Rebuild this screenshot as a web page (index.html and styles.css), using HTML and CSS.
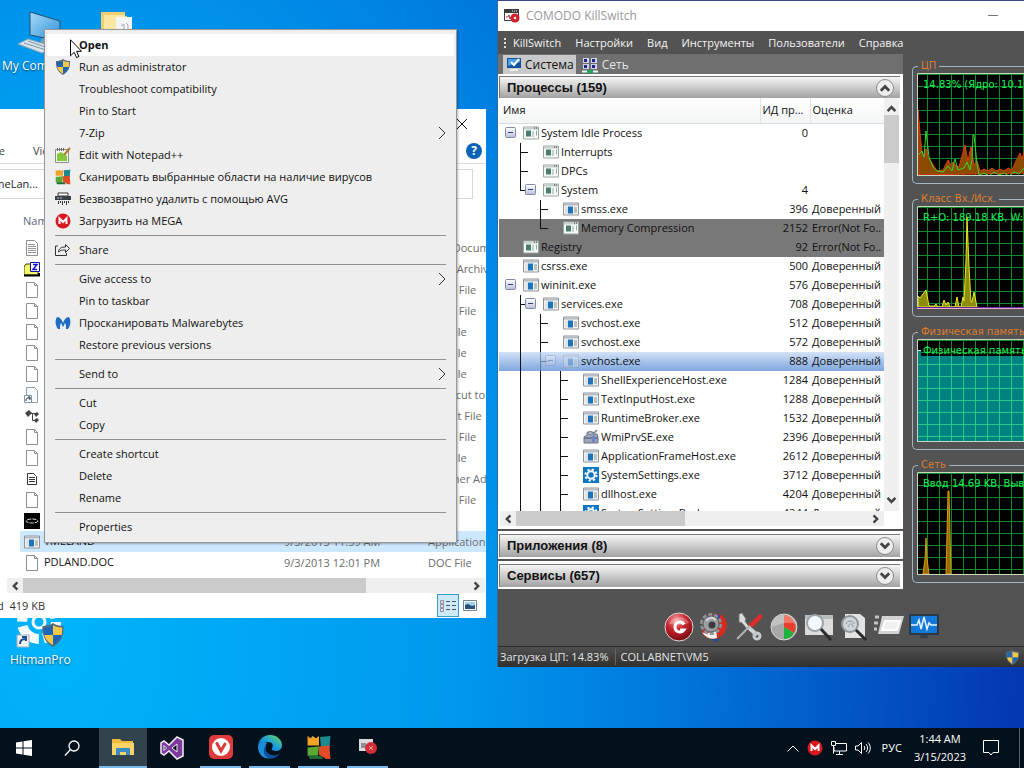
FILE: index.html
```html
<!DOCTYPE html>
<html lang="ru">
  <head>
    <meta charset="UTF-8" />
    <meta name="viewport" content="width=device-width, initial-scale=1.0" />
    <title>COMODO KillSwitch</title>
    <link rel="stylesheet" href="styles.css">
  </head>
  <body>
    <!-- shared icons -->
    <svg class="sprite" aria-hidden="true">
      <defs>
        <linearGradient id="screenFill" x1="0" y1="0" x2="1" y2="1">
          <stop offset="0" stop-color="#a8dcf8" />
          <stop offset="1" stop-color="#2a8fd8" />
        </linearGradient>
        <linearGradient id="edgeFill" x1="0" y1="1" x2="1" y2="0">
          <stop offset="0" stop-color="#0c59a4" />
          <stop offset="0.5" stop-color="#1b9de2" />
          <stop offset="1" stop-color="#6be04c" />
        </linearGradient>
        <radialGradient id="redBall" cx="0.4" cy="0.25" r="0.8">
          <stop offset="0" stop-color="#f3a0a0" />
          <stop offset="0.45" stop-color="#c8232c" />
          <stop offset="1" stop-color="#6d0a10" />
        </radialGradient>
        <linearGradient id="expanderFill" x1="0" y1="0" x2="0" y2="1">
          <stop offset="0" stop-color="#ffffff" />
          <stop offset="1" stop-color="#b9bfdc" />
        </linearGradient>
        <pattern id="grid" width="12" height="12" patternUnits="userSpaceOnUse">
          <path d="M10.5 0V12M0 1.5H12" stroke="#128a2c" />
        </pattern>
        <pattern id="gridTeal" width="12" height="12" patternUnits="userSpaceOnUse">
          <path d="M10.5 0V12M0 1.5H12" stroke="#22c987" />
        </pattern>
      </defs>
      <symbol id="exe" viewBox="0 0 16 13">
        <path d="M.5.5h15v12H.5z" fill="#f4f4f4" stroke="#8d949c" />
        <path d="M1 1h14v2H1z" fill="#b4bcc4" />
        <path d="M2 4h3v7H2z" fill="#dfe3e6" />
        <path d="M5 4h5v7H5z" fill="#1c75bc" />
        <path d="M11 5.500h3M11 7.500h3M11 9.500h3" stroke="#8c8c8c" />
      </symbol>
      <symbol id="sys" viewBox="0 0 16 13">
        <path d="M.5.5h15v12H.5z" fill="#f6faf7" stroke="#9aa59f" />
        <path d="M1 1h14v2H1z" fill="#c6d0ca" />
        <path d="M11 1h1v1h-1zM13 1h1v1h-1z" fill="#333" />
        <path d="M3 4h5v6H3z" fill="#4b7d6c" />
        <path d="M9 5.500h2M9 7.500h2M9 9.500h2M13.500 4v5" stroke="#8faaa0" />
      </symbol>
      <symbol id="gear" viewBox="0 0 16 16">
        <path d="M0 0h16v16H0z" fill="#0f76c4" />
        <circle cx="8" cy="8" r="3.700" fill="none" stroke="#fff" stroke-width="2" />
        <circle cx="8" cy="8" r="5.600" fill="none" stroke="#fff" stroke-width="2" stroke-dasharray="2.200 2.200" />
      </symbol>
      <symbol id="wmi" viewBox="0 0 16 16">
        <path d="M1 8l4-3h9l1 3v6H1z" fill="#9aa3b8" stroke="#6d7486" />
        <path d="M1 9h14" stroke="#525a6e" />
        <path d="M4 5c0-3 6-3 7 0M11 4l3-3" fill="none" stroke="#7c8494" stroke-width="1.500" />
        <path d="M9 7h3v6H9z" fill="#6d88c4" />
      </symbol>
      <symbol id="minus" viewBox="0 0 12 12">
        <rect x=".5" y=".5" width="10" height="10" rx="1" fill="url(#expanderFill)" stroke="#8087a8" />
        <path d="M3 5.500h5" stroke="#34446e" />
      </symbol>
      <symbol id="page" viewBox="0 0 16 16">
        <path d="M2.500.5h8l3 3v12h-11z" fill="#fff" stroke="#8f8f8f" />
        <path d="M10.500.5v3h3" fill="none" stroke="#8f8f8f" />
      </symbol>
      <symbol id="text-page" viewBox="0 0 16 16">
        <path d="M2.500.5h8l3 3v12h-11z" fill="#fff" stroke="#8f8f8f" />
        <path d="M4 4.500h7M4 6.500h8M4 8.500h8M4 10.500h8M4 12.500h8" stroke="#999" />
      </symbol>
      <symbol id="shield" viewBox="0 0 16 16">
        <path d="M8 0c2 1.500 4.500 2 7 2 .4 7-2 11-7 14C3 13 .6 9 1 2c2.500 0 5-.5 7-2z" fill="#5b6b7c" />
        <path d="M8 1.500V8H2.200C1.900 6.500 1.900 4.500 2 3c2 0 4-.4 6-1.500z" fill="#1e66b4" />
        <path d="M8 1.500V8h5.800c.3-1.500.3-3.500.2-5-2 0-4-.4-6-1.500z" fill="#f5c746" />
        <path d="M8 8v6.700C4.700 12.700 2.900 11 2.200 8z" fill="#f5c746" />
        <path d="M8 8v6.700c3.300-2 5.100-3.700 5.800-6.700z" fill="#1e66b4" />
      </symbol>
      <symbol id="avg" viewBox="0 0 24 24">
        <path d="M1 1l3 2 2-2 3 2 3-2v9H1z" fill="#f2a128" />
        <path d="M13 2l10-1-1 11-8 1z" fill="#1a8a8e" />
        <path d="M1 12l11-1-1 9H1z" fill="#5aa832" />
        <path d="M12 11l10-1 1 13h-4l-7-4z" fill="#e04b26" />
        <path d="M2 20h12l2 3H3z" fill="#1d6a34" />
      </symbol>
      <symbol id="mega" viewBox="0 0 16 16">
        <circle cx="8" cy="8" r="7.500" fill="#d9171f" />
        <path d="M4.500 11V5.500L8 9l3.500-3.500V11" fill="none" stroke="#fff" stroke-width="2" />
      </symbol>
      <symbol id="right" viewBox="0 0 8 14">
        <path d="M1 1l6 6-6 6" fill="none" stroke="#333" />
      </symbol>
      <symbol id="chevron" viewBox="0 0 10 10">
        <path d="M2 7l3-3 3 3" fill="none" stroke="#444" stroke-width="2" />
      </symbol>
    </svg>

    <main class="desktop">
      <a class="shortcut my-computer" href="#">
        <svg viewBox="0 0 44 44" width="44" height="44">
          <path d="M12 2l30 9v20l-30-6z" fill="url(#screenFill)" stroke="#24506e" />
          <path d="M24 28l8 2 2 6-12-3z" fill="#7f9cb0" />
          <path d="M10 29l26 8-12 6-24-9z" fill="#d9e4ec" stroke="#93a9b8" />
          <path d="M6 33l22 7M10 31l20 7" stroke="#7d94a4" />
        </svg>
        <span>My Computer</span>
      </a>
      <a class="shortcut folder" href="#" aria-label="Folder">
        <svg viewBox="0 0 32 34" width="32" height="34">
          <path d="M0 1l24 0v4h2v29H0z" fill="#f2cf6e" />
          <path d="M3 4h21v30H3z" fill="#fbe6a2" />
          <path d="M15 6h16v24H15z" fill="#f3f4f5" />
          <path d="M20 15l3-2v5M25 12l2 2v4" fill="none" stroke="#a7adb3" />
        </svg>
      </a>
      <a class="shortcut hitman" href="#">
        <svg viewBox="0 0 52 44" width="52" height="44">
          <circle cx="25" cy="14" r="17" fill="none" stroke="#f6fbff" stroke-width="10" stroke-dasharray="22 4.700" />
          <circle cx="25" cy="14" r="6" fill="none" stroke="#f6fbff" stroke-width="3" />
          <path d="M3 27h12v12H3z" fill="#f2f2f2" stroke="#9bb1bd" />
          <path d="M6 36c0-4 2-5 5-5M8 29h4v4" fill="none" stroke="#1e4f8e" stroke-width="2" />
          <svg x="27" y="15" width="24" height="24"><use href="#shield" /></svg>
        </svg>
        <span>HitmanPro</span>
      </a>

      <section class="window explorer">
        <header class="explorer-title">
          <button class="plain" aria-label="Close">
            <svg viewBox="0 0 10 10" width="10" height="10"><path d="M0 0l10 10M10 0L0 10" stroke="#111" /></svg>
          </button>
        </header>
        <nav class="ribbon">
          <a href="#" class="cut-left">Share</a>
          <a href="#">View</a>
          <button class="help" aria-label="Help">?</button>
        </nav>
        <div class="address">
          <div class="path"><span>TimeLan...</span></div>
          <input class="search-box" type="text" aria-label="Search" />
        </div>
        <table class="files">
          <colgroup><col class="file-name"><col class="file-date"><col></colgroup>
          <thead>
            <tr><th>Name</th><th>Date modified</th><th>Type</th></tr>
          </thead>
          <tbody>
            <tr><td><svg><use href="#text-page" /></svg>README</td><td></td><td>Text Document</td></tr>
            <tr>
              <td>
                <svg viewBox="0 0 16 16">
                  <path d="M0 6l2-3h12v11H0z" fill="#f8f86c" stroke="#3c3c00" />
                  <path d="M0 14.500h15V12" stroke="#000" stroke-width="2" fill="none" />
                  <path d="M6.500 1.500h9v9h-9z" fill="#fff" stroke="#1414a0" />
                  <path d="M9 3.500h4l-4 5h4" fill="none" stroke="#1414c8" stroke-width="1.500" />
                </svg>TIMELAND
              </td>
              <td></td><td>7-ZIP Archive</td>
            </tr>
            <tr><td><svg><use href="#page" /></svg>DATA1</td><td></td><td>DATA File</td></tr>
            <tr><td><svg><use href="#page" /></svg>DATA2</td><td></td><td>DATA File</td></tr>
            <tr><td><svg><use href="#page" /></svg>DATA3</td><td></td><td>BIN File</td></tr>
            <tr><td><svg><use href="#page" /></svg>DATA4</td><td></td><td>BIN File</td></tr>
            <tr><td><svg><use href="#page" /></svg>DATA5</td><td></td><td>BIN File</td></tr>
            <tr>
              <td>
                <svg viewBox="0 0 16 16">
                  <path d="M2.500.5h8l3 3v12h-11z" fill="#f5f9fc" stroke="#8f9fb0" />
                  <path d="M.5 8.500h7v7h-7z" fill="#fff" stroke="#7d9ab4" />
                  <path d="M2 14c0-3 1-3 4-3M4 10h2v3" fill="none" stroke="#222" />
                </svg>DOS
              </td>
              <td></td><td>Shortcut to MS-DOS</td>
            </tr>
            <tr>
              <td>
                <svg viewBox="0 0 16 16">
                  <path d="M1 5l4-3 3 3-4 4z" fill="#444" />
                  <path d="M6 5.500h6M8.500 6v6.500h4" fill="none" stroke="#444" />
                  <path d="M10 6l3-2 2 2-3 3zM10 12l3-2 2 2-3 3z" fill="#444" />
                </svg>SETUP
              </td>
              <td></td><td>Object File</td>
            </tr>
            <tr><td><svg><use href="#page" /></svg>DATA6</td><td></td><td>DATA File</td></tr>
            <tr><td><svg><use href="#page" /></svg>DATA7</td><td></td><td>BIN File</td></tr>
            <tr>
              <td>
                <svg viewBox="0 0 16 16">
                  <path d="M3.500 2.500h6l3 3v8h-9z" fill="#fff" stroke="#333" />
                  <path d="M5 6.500h6M5 8.500h6M5 10.500h6" stroke="#333" />
                </svg>LIST
              </td>
              <td></td><td>Outliner Add-in</td>
            </tr>
            <tr><td><svg><use href="#page" /></svg>DATA8</td><td></td><td>DATA File</td></tr>
            <tr>
              <td>
                <svg viewBox="0 0 16 16">
                  <path d="M0 0h16v16H0z" />
                  <ellipse cx="8" cy="8" rx="6" ry="2" fill="none" stroke="#ddd" stroke-dasharray="4 1" />
                </svg>ICON
              </td>
              <td></td><td>Icon</td>
            </tr>
            <tr class="selected"><td><svg><use href="#exe" /></svg>TMELAND</td><td>9/3/2013 11:59 AM</td><td>Application</td></tr>
            <tr><td><svg><use href="#page" /></svg>PDLAND.DOC</td><td>9/3/2013 12:01 PM</td><td>DOC File</td></tr>
          </tbody>
        </table>
        <div class="hscroll">
          <svg class="turn-left"><use href="#chevron" /></svg>
          <div class="track"><div class="thumb"></div></div>
          <svg class="turn-right"><use href="#chevron" /></svg>
        </div>
        <footer class="explorer-status">
          <span>1 item selected&nbsp; 419 KB</span>
          <button class="view-mode active" aria-label="Details">
            <svg viewBox="0 0 16 14" width="16" height="14">
              <path d="M.5 1.500h3v3h-3zM.5 5.500h3v3h-3zM.5 9.500h3v3h-3z" fill="none" stroke="#a08a94" />
              <path d="M6 2.500h4M12 2.500h4M6 6.500h4M12 6.500h4M6 10.500h4M12 10.500h4" stroke="#50565c" />
            </svg>
          </button>
          <button class="view-mode" aria-label="Large icons">
            <svg viewBox="0 0 14 11" width="14" height="11">
              <path d="M.5.5h13v10H.5z" fill="#fff" stroke="#6b8298" />
              <path d="M2 2h10v7H2z" fill="#9fd0ee" />
              <path d="M2 5l3-1 4 2 3-1v4H2z" fill="#24527c" />
            </svg>
          </button>
        </footer>
      </section>

      <section class="window killswitch">
        <header class="ks-title">
          <svg viewBox="0 0 16 14" width="16" height="14">
            <path d="M.5.5h14v11H.5z" fill="#fff" stroke="#3c3c3c" />
            <path d="M0 0h15v4H0z" fill="#3c3c3c" />
            <path d="M8 2h1M10 2h1M12 2h1" stroke="#fff" />
            <path d="M2 8h2l1-2 1 4 1-2h2" fill="none" stroke="#b53a3a" />
            <circle cx="11" cy="9" r="4.500" fill="#d3202b" />
            <circle cx="11" cy="9" r="1.200" fill="#fff" />
          </svg>
          <h1>COMODO KillSwitch</h1>
          <button class="plain" aria-label="Minimize"><svg viewBox="0 0 10 2" width="10" height="2"><path d="M0 .5h10" stroke="#777" /></svg></button>
        </header>
        <nav class="ks-menu">
          <a href="#">KillSwitch</a>
          <a href="#">Настройки</a>
          <a href="#">Вид</a>
          <a href="#">Инструменты</a>
          <a href="#">Пользователи</a>
          <a href="#">Справка</a>
        </nav>
        <div class="ks-body">
          <div class="ks-main">
            <div class="tabs">
              <button class="tab active">
                <svg viewBox="0 0 14 13" width="14" height="13">
                  <path d="M0 0h14v10H0z" fill="#15509a" />
                  <path d="M1 1h12v3L1 8z" fill="#4aa0e0" />
                  <path d="M4 4l3 3 5-6" fill="none" stroke="#fff" stroke-width="2" />
                  <path d="M3 12h8" stroke="#eee" stroke-width="2" />
                </svg>Система
              </button>
              <button class="tab">
                <svg viewBox="0 0 16 16" width="16" height="16">
                  <path d="M1 1h6v5H1zM9 1h6v5H9zM1 7h6v5H1zM9 7h6v5H9z" fill="#cfd0ea" />
                  <path d="M2 2h3v3H2zM10 2h3v3h-3zM2 8h3v3H2zM10 8h3v3h-3z" fill="#23238c" />
                  <path d="M0 14.500h16" stroke="#f0f0f0" stroke-width="2" />
                  <path d="M5 13h6v3H5z" fill="#1ea95c" />
                </svg>Сеть
              </button>
            </div>
            <section class="panel">
              <header class="panel-head">
                <h2>Процессы (159)</h2>
                <button class="round" aria-label="Свернуть"><svg><use href="#chevron" /></svg></button>
              </header>
              <div class="process-view">
                <div class="process-list">
                  <table class="processes">
                    <colgroup><col><col class="col-pid"><col class="col-rating"></colgroup>
                    <thead><tr><th>Имя</th><th>ИД пр...</th><th>Оценка</th></tr></thead>
                    <tbody>
                      <tr><td><div class="node"><i class="slot"><svg><use href="#minus" /></svg></i><svg><use href="#sys" /></svg>System Idle Process</div></td><td>0</td><td></td></tr>
                      <tr><td><div class="node"><i class="slot tee"></i><i class="slot"></i><svg><use href="#sys" /></svg>Interrupts</div></td><td></td><td></td></tr>
                      <tr><td><div class="node"><i class="slot tee"></i><i class="slot"></i><svg><use href="#sys" /></svg>DPCs</div></td><td></td><td></td></tr>
                      <tr><td><div class="node"><i class="slot corner"></i><i class="slot"><svg><use href="#minus" /></svg></i><svg><use href="#sys" /></svg>System</div></td><td>4</td><td></td></tr>
                      <tr><td><div class="node"><i class="slot"></i><i class="slot tee"></i><i class="slot"></i><svg><use href="#exe" /></svg>smss.exe</div></td><td>396</td><td>Доверенный</td></tr>
                      <tr class="frozen"><td><div class="node"><i class="slot"></i><i class="slot corner"></i><i class="slot"></i><svg><use href="#sys" /></svg>Memory Compression</div></td><td>2152</td><td>Error(Not Fo..</td></tr>
                      <tr class="frozen"><td><div class="node"><i class="slot"></i><svg><use href="#sys" /></svg>Registry</div></td><td>92</td><td>Error(Not Fo..</td></tr>
                      <tr><td><div class="node"><i class="slot"></i><svg><use href="#exe" /></svg>csrss.exe</div></td><td>500</td><td>Доверенный</td></tr>
                      <tr><td><div class="node"><i class="slot"><svg><use href="#minus" /></svg></i><svg><use href="#exe" /></svg>wininit.exe</div></td><td>576</td><td>Доверенный</td></tr>
                      <tr><td><div class="node"><i class="slot tee"></i><i class="slot"><svg><use href="#minus" /></svg></i><svg><use href="#exe" /></svg>services.exe</div></td><td>708</td><td>Доверенный</td></tr>
                      <tr><td><div class="node"><i class="slot line"></i><i class="slot tee"></i><i class="slot"></i><svg><use href="#exe" /></svg>svchost.exe</div></td><td>512</td><td>Доверенный</td></tr>
                      <tr><td><div class="node"><i class="slot line"></i><i class="slot tee"></i><i class="slot"></i><svg><use href="#exe" /></svg>svchost.exe</div></td><td>572</td><td>Доверенный</td></tr>
                      <tr class="current"><td><div class="node"><i class="slot line"></i><i class="slot tee"></i><i class="slot"><svg><use href="#minus" /></svg></i><svg><use href="#exe" /></svg>svchost.exe</div></td><td>888</td><td>Доверенный</td></tr>
                      <tr><td><div class="node"><i class="slot line"></i><i class="slot line"></i><i class="slot tee"></i><i class="slot"></i><svg><use href="#exe" /></svg>ShellExperienceHost.exe</div></td><td>1284</td><td>Доверенный</td></tr>
                      <tr><td><div class="node"><i class="slot line"></i><i class="slot line"></i><i class="slot tee"></i><i class="slot"></i><svg><use href="#exe" /></svg>TextInputHost.exe</div></td><td>1288</td><td>Доверенный</td></tr>
                      <tr><td><div class="node"><i class="slot line"></i><i class="slot line"></i><i class="slot tee"></i><i class="slot"></i><svg><use href="#exe" /></svg>RuntimeBroker.exe</div></td><td>1532</td><td>Доверенный</td></tr>
                      <tr><td><div class="node"><i class="slot line"></i><i class="slot line"></i><i class="slot tee"></i><i class="slot"></i><svg><use href="#wmi" /></svg>WmiPrvSE.exe</div></td><td>2396</td><td>Доверенный</td></tr>
                      <tr><td><div class="node"><i class="slot line"></i><i class="slot line"></i><i class="slot tee"></i><i class="slot"></i><svg><use href="#exe" /></svg>ApplicationFrameHost.exe</div></td><td>2612</td><td>Доверенный</td></tr>
                      <tr><td><div class="node"><i class="slot line"></i><i class="slot line"></i><i class="slot tee"></i><i class="slot"></i><svg><use href="#gear" /></svg>SystemSettings.exe</div></td><td>3712</td><td>Доверенный</td></tr>
                      <tr><td><div class="node"><i class="slot line"></i><i class="slot line"></i><i class="slot tee"></i><i class="slot"></i><svg><use href="#exe" /></svg>dllhost.exe</div></td><td>4204</td><td>Доверенный</td></tr>
                      <tr><td><div class="node"><i class="slot line"></i><i class="slot line"></i><i class="slot tee"></i><i class="slot"></i><svg><use href="#gear" /></svg>SystemSettingsBroker.exe</div></td><td>4344</td><td>Доверенный</td></tr>
                    </tbody>
                  </table>
                </div>
                <div class="vscroll">
                  <svg><use href="#chevron" /></svg>
                  <div class="track"><div class="thumb"></div></div>
                  <svg class="turn-down"><use href="#chevron" /></svg>
                </div>
              </div>
              <div class="hscroll ks-scroll">
                <svg class="turn-left"><use href="#chevron" /></svg>
                <div class="track"><div class="thumb"></div></div>
                <svg class="turn-right"><use href="#chevron" /></svg>
              </div>
            </section>
            <section class="panel">
              <header class="panel-head">
                <h2>Приложения (8)</h2>
                <button class="round" aria-label="Развернуть"><svg class="turn-down"><use href="#chevron" /></svg></button>
              </header>
            </section>
            <section class="panel">
              <header class="panel-head">
                <h2>Сервисы (657)</h2>
                <button class="round" aria-label="Развернуть"><svg class="turn-down"><use href="#chevron" /></svg></button>
              </header>
            </section>
          </div>

          <aside class="ks-side">
            <fieldset>
              <legend>ЦП</legend>
              <svg class="chart" viewBox="0 0 107 103" preserveAspectRatio="xMinYMin slice">
                <rect width="107" height="103" />
                <rect width="107" height="103" fill="url(#grid)" />
                <path d="M1 102V37l2 23 2 19 2 5 2-8 2 8 4 6 5 8 6-1 5-10 3 5 2-3 3 4 3 1 3-11 3-11 3 16 3-14 3 18 3-4 3 10 4-2 4 2 4-3 4 3 4-2 4 2 4-3 4 2 4-9 4-8 2 6 4-14v28z" fill="#8a4a00" stroke="#e03a10" />
                <path d="M1 82l4-4 2 6 2-26 3 26 4 10 4 4 6 1 5-6 4 5 3-12 3 11 6-2 3-6 3 8 2-10 1-25 1 0 3 29 2 11 5-2 5 3 5-4 5 3 5-2 5 3 5-4 5 2 4-5 4-2 3-6" fill="none" stroke="#35d82e" />
                <path d="M.5 103V.5H107M0 102.500h107" class="frame" />
                <text x="6" y="15">14.83% (Ядро: 10.16%)</text>
              </svg>
            </fieldset>
            <fieldset>
              <legend>Класс Вх./Исх.</legend>
              <svg class="chart" viewBox="0 0 107 103" preserveAspectRatio="xMinYMin slice">
                <rect width="107" height="103" />
                <rect width="107" height="103" fill="url(#grid)" />
                <path d="M1 101V90l2 2 3-4 3-4 3 16h5l2-2 2 3h4l2-7 2 5 2-3 2 5h5l2-10 2 10h2l2-10 1 4 2-40 1-44 2 50 2 35h1l2-10 3 15z" fill="#8c8c10" stroke="#e8e81c" />
                <path d="M.5 103V.5H107" class="frame" />
                <path d="M0 101.500h107" stroke="#5a2ca8" />
                <path d="M0 102.500h107" stroke="#f0a8c8" />
                <text x="6" y="15">R+O: 189.18 KB, W: 12 KB</text>
              </svg>
            </fieldset>
            <fieldset>
              <legend>Физическая память</legend>
              <svg class="chart" viewBox="0 0 107 103" preserveAspectRatio="xMinYMin slice">
                <rect width="107" height="103" />
                <rect width="107" height="103" fill="url(#grid)" />
                <path d="M0 12h4v5h103v86H0z" fill="#008280" />
                <path d="M0 17h107v86H0z" fill="url(#gridTeal)" />
                <path d="M0 11.500h4" stroke="#9ff" />
                <path d="M.5 103V.5H107M0 102.500h107" class="frame" />
                <text x="6" y="15">Физическая память: 3.4 GB</text>
              </svg>
            </fieldset>
            <fieldset>
              <legend>Сеть</legend>
              <svg class="chart" viewBox="0 0 107 103" preserveAspectRatio="xMinYMin slice">
                <rect width="107" height="103" />
                <rect width="107" height="103" fill="url(#grid)" />
                <path d="M6 102l2-15 1-21 1 21 2 15zM29 102l1-40 1-43 1 0 1 43 1 40z" fill="#9a6a00" stroke="#d89a10" />
                <path d="M.5 103V.5H107M0 102.500h107" class="frame" />
                <text x="6" y="15">Ввод 14.69 KB, Вывод 2 KB</text>
              </svg>
            </fieldset>
          </aside>
        </div>
        <div class="ks-tools">
          <button class="plain" aria-label="COMODO">
            <svg viewBox="0 0 30 30">
              <circle cx="15" cy="15" r="14" fill="url(#redBall)" stroke="#d8d8d8" />
              <path d="M5 12c3-8 17-9 20-1-6 3-13 1-20 1z" fill="#fff" opacity=".25" />
              <path d="M20 12.500c-2-3.500-9-3.500-9 2.500s7 6 9 3h-4" fill="none" stroke="#fff" stroke-width="3" />
            </svg>
          </button>
          <button class="plain" aria-label="Настройки">
            <svg viewBox="0 0 30 30">
              <path d="M15 2c10-2 15 8 12 16-2 5-6 8-12 9-6 0-10-2-12-7z" fill="#d32a22" />
              <path d="M3 20c4 3 9 1 14-4l1 10c-7 2-12-1-15-6z" fill="#f2f2f2" />
              <path d="M16 2l5 1v4l-5-1zM12 27h8l-3 3z" fill="#1e4c9c" />
              <circle cx="12" cy="12" r="9" fill="none" stroke="#8f9296" stroke-width="4" stroke-dasharray="3.800 1.850" />
              <circle cx="12" cy="12" r="8" fill="#9a9da1" stroke="#5d5f62" />
              <circle cx="13" cy="13" r="3.500" fill="#3c3c3c" />
              <path d="M7 9c3-4 7-4 10-1" fill="none" stroke="#d5d7d9" stroke-width="2" />
            </svg>
          </button>
          <button class="plain" aria-label="Инструменты">
            <svg viewBox="0 0 30 30">
              <path d="M5 2l3-1 4 6-1 2 5 7-2 2-6-7-3-1z" fill="#dcdcdc" stroke="#777" />
              <path d="M14 15l9 8" stroke="#d0d4d8" stroke-width="4" />
              <circle cx="23" cy="24" r="3" fill="none" stroke="#c4c9ce" stroke-width="3" />
              <path d="M28 3l-2-1-11 10 3 4L28 6z" fill="#e02c26" />
              <path d="M16 14L3 27" stroke="#b0b4b8" stroke-width="2" />
            </svg>
          </button>
          <button class="plain" aria-label="Статистика">
            <svg viewBox="0 0 30 30">
              <circle cx="15" cy="15" r="13" fill="#a8a8a8" stroke="#d6d6d6" />
              <path d="M15 15V3a12 12 0 0 1 10 18z" fill="#e8402c" />
              <path d="M15 15l10 6a12 12 0 0 1-10 6z" fill="#1eb43c" />
              <path d="M3 15C3 8 8 3 15 3s12 5 12 9c-8-3-16 0-24 3z" fill="#fff" opacity=".3" />
            </svg>
          </button>
          <button class="plain" aria-label="Поиск">
            <svg viewBox="0 0 30 30">
              <path d="M1 3h28v20H1z" fill="#dcdcdc" />
              <path d="M1 3h28v4H1z" fill="#b9bcbc" />
              <circle cx="11" cy="11" r="8" fill="#f4f8fa" stroke="#9aa4aa" stroke-width="2" />
              <path d="M17 17l10 11" stroke="#2b2b2b" stroke-width="3" />
            </svg>
          </button>
          <button class="plain" aria-label="Анализ">
            <svg viewBox="0 0 30 30">
              <path d="M6 2h15l5 4v20H6z" fill="#e2e4e4" />
              <circle cx="11" cy="12" r="8" fill="#cfd6d9" stroke="#8d979c" stroke-width="2" />
              <path d="M7 12c1-4 7-4 8 0M9 15c2-5 5-3 5 0" fill="none" stroke="#8a9499" />
              <path d="M17 18l10 10" stroke="#2b2b2b" stroke-width="3" />
            </svg>
          </button>
          <button class="plain" aria-label="Запуск">
            <svg viewBox="0 0 30 30">
              <path d="M8 4h22l-5 18H4z" fill="#d2d2d2" />
              <path d="M11 9h15l-3 9H8z" fill="#f0f0f0" stroke="#fff" stroke-width="2" />
              <path d="M1 5h4M0 11h4M0 17h3" stroke="#c4c4c4" stroke-width="3" />
            </svg>
          </button>
          <button class="plain" aria-label="Монитор">
            <svg viewBox="0 0 30 30">
              <path d="M1 3h28v19H1z" fill="#1478d8" stroke="#2d3a46" stroke-width="2" />
              <path d="M2 13h6l2-5 2 9 3-12 3 12 2-6 2 2h6" fill="none" stroke="#e8f6ff" stroke-width="1.500" />
              <path d="M12 23h6l2 3H10z" fill="#33404c" />
            </svg>
          </button>
        </div>
        <footer class="ks-status">
          <span>Загрузка ЦП: 14.83%</span>
          <span class="host">COLLABNET\VM5</span>
          <svg class="status-shield"><use href="#shield" /></svg>
        </footer>
      </section>

      <div class="context-menu">
        <button class="hover"><b>Open</b></button>
        <button><svg><use href="#shield" /></svg><span>Run as administrator</span></button>
        <button><span>Troubleshoot compatibility</span></button>
        <button><span>Pin to Start</span></button>
        <button><span>7-Zip</span><svg class="more"><use href="#right" /></svg></button>
        <button>
          <svg viewBox="0 0 16 16">
            <path d="M.5 2.500h13v13H.5z" fill="#f4f4ee" stroke="#8e8e8e" />
            <path d="M2 7l4-2 6 4v5H2z" fill="#86c83c" />
            <path d="M2.500 1v3M4.500 1v3M6.500 1v3M8.500 1v3" stroke="#666" />
            <path d="M15 1L9 8" stroke="#b8752c" stroke-width="2" />
          </svg>
          <span>Edit with Notepad++</span>
        </button>
        <button><svg><use href="#avg" /></svg><span>Сканировать выбранные области на наличие вирусов</span></button>
        <button>
          <svg viewBox="0 0 16 16">
            <path d="M3 2h10v3H3z" fill="#fff" stroke="#333" />
            <path d="M0 5h16v4H0z" fill="#3a3f46" />
            <path d="M3.500 10v3M5.500 10v2M7.500 10v4M9.500 10v2M11.500 10v4M13.500 10v2" stroke="#333" />
            <path d="M2 7h2M5 7h2" stroke="#bcd" />
          </svg>
          <span>Безвозвратно удалить с помощью AVG</span>
        </button>
        <button><svg><use href="#mega" /></svg><span>Загрузить на MEGA</span></button>
        <hr>
        <button>
          <svg viewBox="0 0 16 16">
            <path d="M3 4H.5v9.500h11V11M3.500 10c.5-4 3-5 7-5V2.500L14.500 6.500l-4 4V8c-3 0-5 0-7 2z" fill="none" stroke="#333" />
          </svg>
          <span>Share</span>
        </button>
        <hr>
        <button><span>Give access to</span><svg class="more"><use href="#right" /></svg></button>
        <button><span>Pin to taskbar</span></button>
        <button>
          <svg viewBox="0 0 16 16">
            <path d="M2 2c3 0 5 3 6 6 1-3 3-6 6-6 2 3 2 8-1 12h-2c0-3 0-5-1-6-1 1-1 3-2 4-1-1-1-3-2-4-1 1-1 3-1 6H3C0 10 0 5 2 2z" fill="#1f6cc4" />
          </svg>
          <span>Просканировать Malwarebytes</span>
        </button>
        <button><span>Restore previous versions</span></button>
        <hr>
        <button><span>Send to</span><svg class="more"><use href="#right" /></svg></button>
        <hr>
        <button><span>Cut</span></button>
        <button><span>Copy</span></button>
        <hr>
        <button><span>Create shortcut</span></button>
        <button><span>Delete</span></button>
        <button><span>Rename</span></button>
        <hr>
        <button><span>Properties</span></button>
      </div>

      <svg class="cursor" viewBox="0 0 12 19" width="12" height="19">
        <path d="M.5.8v16l3.700-3.500 2.400 5.200 2.300-1L6.600 12.300h5z" fill="#fff" stroke="#000" />
      </svg>
    </main>

    <footer class="taskbar">
      <button class="task start" aria-label="Start">
        <svg viewBox="0 0 16 16" width="16" height="16"><path d="M0 2.500l6.500-1v6H0zM7.500 1.300L16 0v7.500H7.500zM0 8.500h6.500v6l-6.500-1zM7.500 8.500H16V16l-8.500-1.300z" fill="#fff" /></svg>
      </button>
      <button class="task search" aria-label="Search">
        <svg viewBox="0 0 16 16" width="16" height="16"><circle cx="10" cy="6" r="5" fill="none" stroke="#fff" stroke-width="1.300" /><path d="M6.500 9.500L1 15.500" stroke="#fff" stroke-width="1.300" /></svg>
      </button>
      <button class="task focused" aria-label="File Explorer">
        <svg viewBox="0 0 22 18" width="22" height="18">
          <path d="M0 1h8l2 2h11v14H0z" fill="#f0b93c" />
          <path d="M0 5h22v12H0z" fill="#fbd468" />
          <path d="M4 17v-7h14v7h-4v-3H8v3z" fill="#3a8cc4" />
        </svg>
      </button>
      <button class="task" aria-label="Visual Studio">
        <svg viewBox="0 0 24 24" width="24" height="24">
          <path d="M17 1l6 3v16l-6 3-8-8-5 4-3-2V7l3-2 5 4z" fill="#7d3a9c" stroke="#f4eefa" stroke-width="1.500" />
          <path d="M17 8v8l-5-4zM4 9.500v5L6.500 12z" fill="#03111c" stroke="#f4eefa" />
        </svg>
      </button>
      <button class="task running" aria-label="Vivaldi">
        <svg viewBox="0 0 24 24" width="24" height="24">
          <rect width="24" height="24" rx="5" fill="#e03b3b" />
          <circle cx="12" cy="12" r="9" fill="#fff" />
          <path d="M8 8.500l4 7.500 4-7" fill="none" stroke="#dc3838" stroke-width="3" stroke-linecap="round" />
        </svg>
      </button>
      <button class="task running" aria-label="Edge">
        <svg viewBox="0 0 24 24" width="24" height="24">
          <path d="M0 12C0 5 5 0 12 0s12 5 12 10c0 4-3 6-6 6s-5-1-4-3c2-3 0-6-4-6-5 0-8 3-10 5z" fill="url(#edgeFill)" />
          <path d="M0 12c1-4 6-6 9-4-4 5-3 12 3 15.500C5 24 0 19 0 12z" fill="#1b8fd8" />
          <path d="M9 10c-3 4 0 9 5 10 3 1 6 0 8-2-3 5-8 6-11 5.500C5 21 4 13 9 10z" fill="#0f4fa0" />
        </svg>
      </button>
      <button class="task running" aria-label="AVG"><svg width="26" height="25"><use href="#avg" /></svg></button>
      <button class="task running" aria-label="KillSwitch">
        <svg viewBox="0 0 18 18" width="18" height="18">
          <path d="M0 1h14v12H0z" fill="#d8dadb" />
          <path d="M2 5h5v5H2z" fill="#8a9094" />
          <circle cx="12" cy="10" r="6" fill="#d42d3a" />
          <path d="M10 8l4 4M14 8l-4 4" stroke="#f6a0a6" />
        </svg>
      </button>
      <div class="tray">
        <svg viewBox="0 0 12 7" width="12" height="7"><path d="M.5 6.500L6 1l5.500 5.500" fill="none" stroke="#fff" /></svg>
        <svg width="16" height="16"><use href="#mega" /></svg>
        <svg viewBox="0 0 16 14" width="16" height="14"><path d="M5 2.500h10.500v7.500H3V6M8.500 10v3M5 13.500h7M.5.500h4v4h-4zM2.500 4.500v8" fill="none" stroke="#fff" /></svg>
        <svg viewBox="0 0 16 12" width="16" height="12"><path d="M.5 4v4H3l3.500 3.500V.5L3 4zM9 4c1 1 1 3 0 4M11 2c2 2 2 6 0 8M13 .5c3 3 3 8 0 11" fill="none" stroke="#fff" /></svg>
        <span>РУС</span>
        <time>1:44 AM<br>3/15/2023</time>
        <svg viewBox="0 0 16 16" width="16" height="16"><path d="M.5.5h15v12H10L8 15l-2-2.500H.5z" fill="none" stroke="#fff" /></svg>
      </div>
    </footer>
  </body>
</html>
```
FILE: styles.css
```css
* {
  box-sizing: border-box;
}
body {
  margin: 0;
  height: 100vh;
  display: flex;
  flex-direction: column;
  overflow: hidden;
  font-family: "Open Sans", "Noto Sans", sans-serif;
  font-size: 11px;
  line-height: 16px;
  color: #111;
  background: radial-gradient(ellipse 960px 1400px at 60px 640px, #00b4fa 0%, #0098ee 42%, #007cdf 61%, #0437b2 100%);
}
button {
  font: inherit;
  color: inherit;
  padding: 0;
  border: none;
  background: none;
}
a {
  color: inherit;
  text-decoration: none;
}
svg {
  flex: none;
}
h1,
h2 {
  margin: 0;
}
.sprite {
  position: absolute;
  width: 0;
  height: 0;
}
.turn-left {
  transform: rotate(-90deg);
}
.turn-right {
  transform: rotate(90deg);
}
.turn-down {
  transform: rotate(180deg);
}
.plain {
  display: flex;
}

/* desktop */
.desktop {
  position: relative;
  flex: 1;
  overflow: hidden;
}
.shortcut {
  position: absolute;
  display: flex;
  flex-direction: column;
  align-items: center;
  gap: 4px;
  font-size: 12px;
  color: #fff;
  text-shadow: 0 1px 2px rgba(0, 0, 0, 0.6);
}
.my-computer {
  left: 2px;
  top: 10px;
}
.folder {
  left: 101px;
  top: 11px;
}
.hitman {
  left: 10px;
  top: 608px;
  gap: 0;
}
.window {
  position: absolute;
}

/* file explorer */
.explorer {
  left: 0;
  top: 109px;
  width: 486px;
  background: #fff;
  color: #6d6d6d;
}
.explorer-title {
  display: flex;
  justify-content: flex-end;
  align-items: center;
  height: 30px;
  padding-right: 19px;
}
.ribbon {
  display: flex;
  align-items: center;
  gap: 28px;
  height: 25px;
  padding-right: 4px;
  border-bottom: 1px solid #dcdcdc;
  color: #444;
}
.cut-left {
  display: flex;
  justify-content: flex-end;
  width: 5px;
}
.help {
  width: 16px;
  height: 16px;
  margin-left: auto;
  border-radius: 50%;
  background: #0c62b8;
  color: #fff;
  font-size: 12px;
  font-weight: bold;
}
.address {
  display: flex;
  gap: 8px;
  padding: 5px 13px 5px 0;
}
.path {
  display: flex;
  align-items: center;
  flex: 1;
  height: 30px;
  border: 1px solid #d9d9d9;
  border-left: none;
  color: #222;
}
.path span {
  display: flex;
  justify-content: flex-end;
  width: 38px;
  white-space: nowrap;
}
.search-box {
  width: 160px;
  border: 1px solid #d9d9d9;
}
.files {
  width: calc(100% - 20px);
  margin-left: 20px;
  table-layout: fixed;
  border-collapse: collapse;
}
.file-name {
  width: 260px;
}
.file-date {
  width: 144px;
}
.files th {
  height: 33px;
  padding: 0 3px;
  text-align: left;
  font-weight: normal;
  color: #5a6a7c;
}
.files td {
  height: 21px;
  padding: 0 0 0 4px;
  overflow: hidden;
  white-space: nowrap;
}
.files td:first-child {
  color: #111;
}
.files svg {
  width: 16px;
  height: 16px;
  margin-right: 4px;
  vertical-align: middle;
}
.files .selected {
  background: #cce8ff;
}
.hscroll {
  display: flex;
  align-items: center;
  height: 15px;
  background: #efefef;
}
.explorer .hscroll {
  margin: 5px 1px 0 7px;
}
.hscroll svg {
  width: 16px;
  height: 12px;
}
.track {
  flex: 1;
}
.hscroll .thumb {
  width: 77%;
  height: 15px;
  background: #cbcbcb;
}
.explorer-status {
  display: flex;
  align-items: center;
  height: 25px;
  padding-right: 5px;
  color: #333;
}
.explorer-status span {
  display: flex;
  justify-content: flex-end;
  width: 45px;
  margin-right: auto;
  white-space: nowrap;
}
.view-mode {
  display: flex;
  align-items: center;
  justify-content: center;
  width: 22px;
  height: 23px;
}
.view-mode.active {
  border: 1px solid #3a9acb;
  background: #cdeaf8;
}

/* killswitch */
.killswitch {
  left: 497px;
  right: 0;
  top: 0;
  border-top: 1px solid #3a4a8c;
  border-left: 1px solid #2c6a9c;
  background: #535353;
}
.ks-title {
  display: flex;
  align-items: center;
  gap: 6px;
  height: 30px;
  padding: 0 26px 0 6px;
  background: #fff;
}
.ks-title h1 {
  flex: 1;
  font-size: 12px;
  font-weight: normal;
  color: #999;
}
.ks-menu {
  display: flex;
  align-items: center;
  gap: 14px;
  height: 23px;
  padding-left: 6px;
  color: #f4f4f4;
}
.ks-menu::before {
  content: "";
  width: 2px;
  height: 10px;
  margin-right: -7px;
  background: repeating-linear-gradient(#ddd 0 2px, transparent 2px 4px);
}
.ks-body {
  display: flex;
}
.ks-main {
  flex: 1;
  min-width: 0;
}
.tabs {
  display: flex;
  gap: 4px;
  height: 20px;
  padding: 1px 5px 0;
  background: #6f6f6f;
}
.tab {
  display: flex;
  align-items: center;
  gap: 4px;
  padding: 0 2px;
  font-size: 12px;
  color: #e4e4e4;
}
.tab.active {
  padding-left: 4px;
  background: #c9c9c9;
  color: #111;
}
.panel {
  border: 1px solid #fff;
  border-width: 2px 3px 3px 1px;
  background: #fff;
}
.panel + .panel {
  margin-top: 2px;
  border-top: 3px double #fff;
  border-bottom-width: 2px;
}
.panel-head {
  display: flex;
  align-items: center;
  justify-content: space-between;
  height: 22px;
  padding: 0 6px 0 7px;
  border-top: 1px solid #777;
  border-left: 1px solid #777;
  background: linear-gradient(#f6f6f6, #a2a2a2);
}
.panel + .panel .panel-head {
  height: 23px;
}
.panel-head h2 {
  font-family: "Liberation Sans", Arial, sans-serif;
  font-size: 13px;
}
.round {
  display: flex;
  align-items: center;
  justify-content: center;
  width: 18px;
  height: 18px;
  border: 1px solid #8a8a8a;
  border-radius: 50%;
  background: #eee;
}
.round svg {
  width: 14px;
  height: 14px;
}
.process-view {
  display: flex;
  height: 413px;
}
.process-list {
  flex: 1;
  min-width: 0;
  overflow: hidden;
}
.processes {
  width: 100%;
  table-layout: fixed;
  border-collapse: collapse;
}
.col-pid {
  width: 50px;
}
.col-rating {
  width: 74px;
}
.processes th {
  height: 25px;
  padding: 0 4px;
  border-bottom: 1px solid #d5dde0;
  text-align: left;
  font-weight: normal;
  white-space: nowrap;
  background: linear-gradient(#fff, #f4f5f6);
}
.processes th + th {
  padding: 0 2px;
  border-left: 1px solid #dde3e6;
}
.processes td {
  height: 19px;
  padding: 0 0 0 2px;
  overflow: hidden;
  white-space: nowrap;
}
.processes td:first-child {
  padding-left: 4px;
}
.processes td:nth-child(2) {
  padding: 0 2px;
  text-align: right;
}
.node {
  display: flex;
  align-items: center;
  height: 19px;
}
.node > svg {
  width: 16px;
  height: 16px;
  margin-right: 2px;
}
.slot {
  position: relative;
  flex: none;
  width: 20px;
  height: 19px;
  padding: 3px 2px;
}
.slot svg {
  display: block;
  position: relative;
  z-index: 1;
  width: 12px;
  height: 12px;
}
.line,
.tee {
  background: linear-gradient(#111, #111) 17px 0 / 1px 100% no-repeat;
}
.corner {
  background: linear-gradient(#111, #111) 17px 0 / 1px 10px no-repeat;
}
.tee::after,
.corner::after {
  content: "";
  position: absolute;
  left: 17px;
  top: 9px;
  width: 8px;
  height: 1px;
  background: #111;
}
.frozen {
  background: #787878;
}
.current {
  background: linear-gradient(#d3e2f8, #7fa6de);
}
.current svg,
.current .tee {
  opacity: 0.35;
}
.vscroll {
  display: flex;
  flex-direction: column;
  align-items: center;
  width: 15px;
  margin-right: 1px;
  padding: 4px 0;
  background: #f0f0f0;
}
.vscroll svg {
  width: 13px;
  height: 13px;
}
.vscroll .track {
  width: 15px;
}
.vscroll .thumb {
  height: 48px;
  background: #cbcbcb;
}
.ks-scroll {
  margin: 0 16px 0 1px;
}
.ks-scroll .thumb {
  width: 48%;
}
.ks-side {
  width: 121px;
  padding: 6px 0 0 9px;
  overflow: hidden;
}
fieldset {
  min-width: 0;
  margin: 0 0 9px;
  padding: 1px 0 7px 4px;
  border: 1px solid #9fb4c4;
  border-right: none;
  border-radius: 5px 0 0 5px;
}
legend {
  height: 12px;
  margin-left: 1px;
  padding: 0 3px;
  font: 10px/12px "DejaVu Sans", sans-serif;
  color: #dc7d30;
  white-space: nowrap;
}
.chart {
  display: block;
  width: 100%;
  height: 103px;
}
.chart text {
  font: 10px "DejaVu Sans", sans-serif;
  fill: #14f050;
}
.frame {
  fill: none;
  stroke: #c8d8c0;
}
.ks-tools {
  display: flex;
  gap: 5px;
  padding: 20px 0 4px 166px;
}
.ks-tools svg {
  width: 30px;
  height: 30px;
}
.ks-status {
  display: flex;
  align-items: center;
  height: 21px;
  padding: 0 4px 0 2px;
  border-top: 1px solid #2a2a2a;
  background: linear-gradient(#505050, #303030);
  color: #e4e4e4;
}
.host {
  margin-left: 6px;
  padding-left: 5px;
  border-left: 1px solid #666;
}
.status-shield {
  width: 15px;
  height: 15px;
  margin-left: auto;
}

/* context menu */
.context-menu {
  position: absolute;
  left: 44px;
  top: 29px;
  width: 413px;
  padding: 4px 2px;
  border: 1px solid #989898;
  background: #eee;
  box-shadow: 1px 1px 2px rgba(0, 0, 0, 0.3);
}
.context-menu button {
  display: flex;
  align-items: center;
  width: 100%;
  height: 22px;
  padding: 0 8px;
}
.context-menu svg {
  width: 16px;
  height: 16px;
  margin-right: 8px;
}
.context-menu span:first-child,
.context-menu b {
  padding-left: 24px;
}
.context-menu .more {
  width: 8px;
  height: 14px;
  margin: 0 0 0 auto;
}
.context-menu .hover {
  background: #fff;
}
.context-menu hr {
  height: 1px;
  margin: 3px 8px;
  border: none;
  background: #919191;
}
.cursor {
  position: absolute;
  left: 70px;
  top: 39px;
}

/* taskbar */
.taskbar {
  display: flex;
  height: 40px;
  background: #03111c;
  color: #fff;
}
.task {
  display: flex;
  align-items: center;
  justify-content: center;
  width: 49px;
}
.start {
  width: 48px;
}
.search {
  width: 48px;
  margin-right: 3px;
}
.focused {
  width: 48px;
  background: #33434e;
  border-bottom: 2px solid #76b9ed;
}
.running {
  width: 41px;
  margin: 0 4px;
  border-bottom: 2px solid #76b9ed;
}
.tray {
  display: flex;
  align-items: center;
  gap: 8px;
  margin-left: auto;
  margin-right: 4px;
  padding-right: 20px;
  border-right: 1px solid #54606a;
}
.tray span {
  margin-left: 3px;
}
.tray time {
  margin: 0 9px 0 4px;
  line-height: 18px;
  text-align: center;
}
```
